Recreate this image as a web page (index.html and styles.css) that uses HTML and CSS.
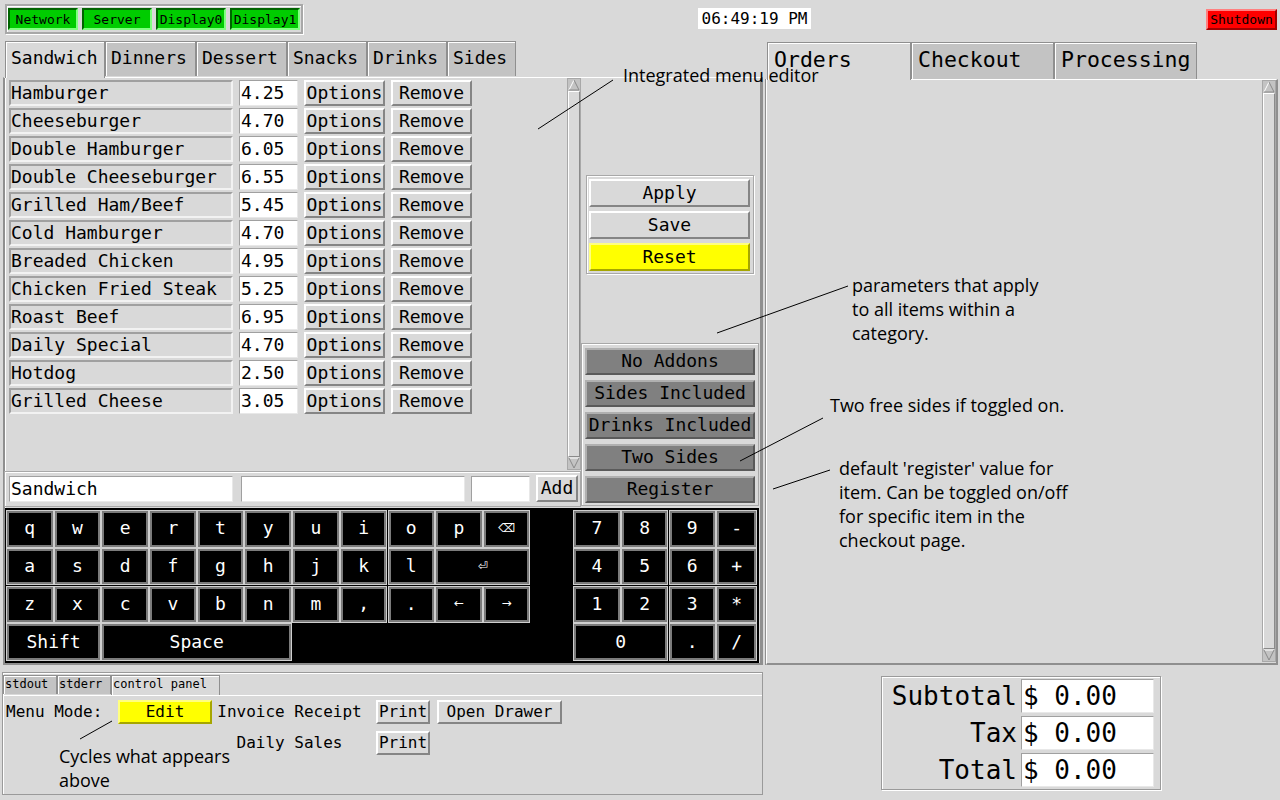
FILE: index.html
```html
<!DOCTYPE html>
<html>
<head>
<meta charset="utf-8">
<title>POS</title>
<link rel="stylesheet" href="styles.css">
</head>
<body>
<header class="topbar">
  <div class="status-group">
    <span class="status">Network</span>
    <span class="status">Server</span>
    <span class="status">Display0</span>
    <span class="status">Display1</span>
  </div>
  <div class="clock">06:49:19 PM</div>
  <div class="shutdown">Shutdown</div>
</header>

<div class="main">
  <section class="menu-panel">
    <nav class="tabs">
      <span class="tab active w-sandwich">Sandwich</span>
      <span class="tab w-dinners">Dinners</span>
      <span class="tab w-dessert">Dessert</span>
      <span class="tab w-snacks">Snacks</span>
      <span class="tab w-drinks">Drinks</span>
      <span class="tab w-sides">Sides</span>
    </nav>
    <div class="menu-body">
      <div class="item-list">
        <div class="items">
          <div class="row"><span class="name">Hamburger</span><span class="price">4.25</span><span class="btn">Options</span><span class="btn">Remove</span></div>
          <div class="row"><span class="name">Cheeseburger</span><span class="price">4.70</span><span class="btn">Options</span><span class="btn">Remove</span></div>
          <div class="row"><span class="name">Double Hamburger</span><span class="price">6.05</span><span class="btn">Options</span><span class="btn">Remove</span></div>
          <div class="row"><span class="name">Double Cheeseburger</span><span class="price">6.55</span><span class="btn">Options</span><span class="btn">Remove</span></div>
          <div class="row"><span class="name">Grilled Ham/Beef</span><span class="price">5.45</span><span class="btn">Options</span><span class="btn">Remove</span></div>
          <div class="row"><span class="name">Cold Hamburger</span><span class="price">4.70</span><span class="btn">Options</span><span class="btn">Remove</span></div>
          <div class="row"><span class="name">Breaded Chicken</span><span class="price">4.95</span><span class="btn">Options</span><span class="btn">Remove</span></div>
          <div class="row"><span class="name">Chicken Fried Steak</span><span class="price">5.25</span><span class="btn">Options</span><span class="btn">Remove</span></div>
          <div class="row"><span class="name">Roast Beef</span><span class="price">6.95</span><span class="btn">Options</span><span class="btn">Remove</span></div>
          <div class="row"><span class="name">Daily Special</span><span class="price">4.70</span><span class="btn">Options</span><span class="btn">Remove</span></div>
          <div class="row"><span class="name">Hotdog</span><span class="price">2.50</span><span class="btn">Options</span><span class="btn">Remove</span></div>
          <div class="row"><span class="name">Grilled Cheese</span><span class="price">3.05</span><span class="btn">Options</span><span class="btn">Remove</span></div>
        </div>
        <div class="scrollbar">
          <svg class="arrow" viewBox="0 0 12 12" width="12" height="12"><polyline points="1,11 6,1" stroke="#fff" fill="none"/><polyline points="6,1 11,11 1,11" stroke="#8a8a8a" fill="none"/></svg>
          <div class="thumb"></div>
          <svg class="arrow" viewBox="0 0 12 12" width="12" height="12"><polyline points="1,1 11,1" stroke="#fff" fill="none"/><polyline points="1,1 6,11 11,1" stroke="#8a8a8a" fill="none"/></svg>
        </div>
      </div>

      <div class="side">
        <div class="actions">
          <span class="act">Apply</span>
          <span class="act">Save</span>
          <span class="act reset">Reset</span>
        </div>
        <div class="addons">
          <span class="addon">No Addons</span>
          <span class="addon">Sides Included</span>
          <span class="addon">Drinks Included</span>
          <span class="addon">Two Sides</span>
          <span class="addon">Register</span>
        </div>
      </div>

      <div class="entry">
        <span class="field f-name">Sandwich</span>
        <span class="field f-desc"></span>
        <span class="field f-price"></span>
        <span class="btn add">Add</span>
      </div>

      <div class="keyboard">
        <span class="key">q</span><span class="key">w</span><span class="key">e</span><span class="key">r</span><span class="key">t</span><span class="key">y</span><span class="key">u</span><span class="key">i</span><span class="key">o</span><span class="key">p</span><span class="key sym">⌫</span>
        <span class="key np1">7</span><span class="key">8</span><span class="key">9</span><span class="key">-</span>

        <span class="key">a</span><span class="key">s</span><span class="key">d</span><span class="key">f</span><span class="key">g</span><span class="key">h</span><span class="key">j</span><span class="key">k</span><span class="key">l</span><span class="key sym span2">⏎</span>
        <span class="key np1">4</span><span class="key">5</span><span class="key">6</span><span class="key">+</span>

        <span class="key">z</span><span class="key">x</span><span class="key">c</span><span class="key">v</span><span class="key">b</span><span class="key">n</span><span class="key">m</span><span class="key">,</span><span class="key">.</span><span class="key sym">←</span><span class="key sym">→</span>
        <span class="key np1">1</span><span class="key">2</span><span class="key">3</span><span class="key">*</span>

        <span class="key span2">Shift</span><span class="key span4">Space</span>
        <span class="key np1 span2">0</span><span class="key">.</span><span class="key">/</span>
      </div>
    </div>
  </section>

  <section class="orders-panel">
    <nav class="tabs otabs">
      <span class="otab active">Orders</span>
      <span class="otab">Checkout</span>
      <span class="otab">Processing</span>
    </nav>
    <div class="orders-body">
      <div class="spacer"></div>
      <div class="scrollbar oscroll">
        <svg class="arrow" viewBox="0 0 12 12" width="12" height="12"><polyline points="1,11 6,1" stroke="#fff" fill="none"/><polyline points="6,1 11,11 1,11" stroke="#8a8a8a" fill="none"/></svg>
        <div class="thumb"></div>
        <svg class="arrow" viewBox="0 0 12 12" width="12" height="12"><polyline points="1,1 11,1" stroke="#fff" fill="none"/><polyline points="1,1 6,11 11,1" stroke="#8a8a8a" fill="none"/></svg>
      </div>
    </div>
  </section>
</div>

<div class="bottom">
  <section class="console">
    <nav class="ctabs">
      <span class="ctab w-stdout">stdout</span>
      <span class="ctab w-stderr">stderr</span>
      <span class="ctab active w-cp">control panel</span>
    </nav>
    <div class="cbody">
      <span class="clabel">Menu Mode:</span>
      <span class="cbtn edit">Edit</span>
      <span class="clabel center">Invoice Receipt</span>
      <span class="cbtn">Print</span>
      <span></span>
      <span class="cbtn">Open Drawer</span>
      <span></span>
      <span></span>
      <span class="clabel center">Daily Sales</span>
      <span class="cbtn">Print</span>
    </div>
  </section>
  <section class="totals">
    <span class="tlabel">Subtotal</span><span class="tval">$ 0.00</span>
    <span class="tlabel">Tax</span><span class="tval">$ 0.00</span>
    <span class="tlabel">Total</span><span class="tval">$ 0.00</span>
  </section>
</div>

<div class="notes">
  <svg class="note-lines" width="1280" height="800" viewBox="0 0 1280 800">
    <line x1="538" y1="129" x2="613" y2="80"/>
    <line x1="717" y1="333" x2="848" y2="286"/>
    <line x1="740" y1="461" x2="823" y2="418"/>
    <line x1="773" y1="489" x2="830" y2="470"/>
    <line x1="80" y1="739" x2="112" y2="721"/>
  </svg>
  <p class="note n-editor">Integrated menu editor</p>
  <p class="note n-params">parameters that apply<br>to all items within a<br>category.</p>
  <p class="note n-sides">Two free sides if toggled on.</p>
  <p class="note n-register">default 'register' value for<br>item. Can be toggled on/off<br>for specific item in the<br>checkout page.</p>
  <p class="note n-cycles">Cycles what appears<br>above</p>
</div>
</body>
</html>
```

FILE: styles.css
```css
* { box-sizing: border-box; }
html, body { margin: 0; padding: 0; }
body {
  width: 1280px;
  height: 800px;
  background: #d9d9d9;
  font-family: "DejaVu Sans Mono", "Liberation Mono", monospace;
  color: #000;
  position: relative;
  overflow: hidden;
}

/* ---------- top bar ---------- */
.topbar {
  height: 40px;
  display: flex;
  align-items: flex-start;
  padding: 4px 3px 0 5px;
}
.status-group {
  display: flex;
  gap: 4px;
  padding: 2px 1px;
  border: 2px solid #a8a8a8;
  box-shadow: inset 1px 1px 0 #fff, 1px 1px 0 #fff;
  height: 30px;
}
.status {
  width: 70px;
  height: 22px;
  background: #00cc00;
  border: 2px solid;
  border-color: #006400 #80ff80 #80ff80 #006400;
  font-size: 13px;
  display: flex;
  align-items: center;
  justify-content: center;
}
.clock {
  margin-left: 395px;
  margin-top: 4px;
  width: 113px;
  height: 21px;
  background: #fff;
  font-size: 16px;
  display: flex;
  align-items: center;
  justify-content: center;
}
.shutdown {
  margin-left: auto;
  margin-top: 5px;
  width: 71px;
  height: 21px;
  background: #ff0000;
  border: 2px solid;
  border-color: #ff8080 #a00000 #a00000 #ff8080;
  font-size: 13px;
  display: flex;
  align-items: center;
  justify-content: center;
}

/* ---------- main ---------- */
.main {
  display: flex;
  gap: 3px;
  padding-left: 3px;
  height: 625px;
}
.menu-panel {
  width: 760px;
  display: flex;
  flex-direction: column;
}
.tabs {
  display: flex;
  height: 37px;
  padding: 1px 0 0 2px;
  position: relative;
  z-index: 1;
}
.tab {
  height: 35px;
  background: #c3c3c3;
  border: 1px solid #8f8f8f;
  border-bottom: none;
  box-shadow: inset 1px 1px 0 #fff;
  font-size: 18px;
  padding: 5px 0 0 5px;
  line-height: 22px;
}
.tab.active {
  height: 37px;
  background: #d9d9d9;
}
.w-sandwich { width: 100px; }
.w-dinners { width: 91px; }
.w-dessert { width: 91px; }
.w-snacks { width: 80px; }
.w-drinks { width: 80px; }
.w-sides { width: 69px; }

.menu-body {
  flex: 1;
  border-style: solid;
  border-width: 1px 3px 2px 2px;
  border-color: #fff #8f8f8f #8f8f8f #8f8f8f;
  box-shadow: inset 1px 0 0 #fff;
  display: grid;
  grid-template-columns: 576px 1fr;
  grid-template-rows: 392px 38px 1fr;
}

.item-list {
  display: flex;
}
.items {
  flex: 1;
  padding: 2px 0 0 4px;
  display: flex;
  flex-direction: column;
  gap: 2px;
}
.row {
  display: flex;
  gap: 6px;
  height: 26px;
}
.name, .price, .btn, .field, .act, .addon, .key, .cbtn, .tval {
  display: flex;
  align-items: center;
  white-space: pre;
  padding-bottom: 2px;
}
.name {
  width: 224px;
  font-size: 18px;
  border: 2px solid;
  border-color: #a0a0a0 #f2f2f2 #f2f2f2 #a0a0a0;
}
.price {
  width: 59px;
  background: #fff;
  font-size: 18px;
  border: 1px solid;
  border-color: #a0a0a0 #e8e8e8 #e8e8e8 #a0a0a0;
  padding-left: 1px;
}
.btn {
  width: 81px;
  font-size: 18px;
  justify-content: center;
  border: 2px solid;
  border-color: #fff #858585 #858585 #fff;
}

.scrollbar {
  width: 14px;
  display: flex;
  flex-direction: column;
  border: 1px solid #a8a8a8;
  background: #c3c3c3;
}
.arrow { display: block; flex: none; margin: 0 auto; }
.thumb {
  flex: 1;
  border: 1px solid;
  border-color: #fff #8a8a8a #8a8a8a #fff;
  background: #d9d9d9;
}

/* side column */
.side {
  grid-row: 1 / span 2;
  grid-column: 2;
  display: flex;
  flex-direction: column;
}
.actions {
  margin: 97px 0 0 5px;
  width: 168px;
  border: 1px solid #a8a8a8;
  box-shadow: inset 1px 1px 0 #fff, 1px 1px 0 #fff;
  padding: 3px 3px 2px 2px;
  display: flex;
  flex-direction: column;
  gap: 4px;
}
.act {
  height: 28px;
  justify-content: center;
  font-size: 18px;
  border: 2px solid;
  border-color: #fff #858585 #858585 #fff;
}
.act.reset {
  background: #ffff00;
  border-color: #ffff80 #a6a600 #a6a600 #ffff80;
}
.addons {
  margin-top: 69px;
  width: 178px;
  height: 163px;
  border: 1px solid #a8a8a8;
  box-shadow: inset 1px 1px 0 #fff;
  padding: 4px 3px 0 3px;
  display: flex;
  flex-direction: column;
  gap: 5px;
}
.addon {
  height: 27px;
  justify-content: center;
  font-size: 18px;
  background: #808080;
  border: 2px solid;
  border-color: #b0b0b0 #5a5a5a #5a5a5a #b0b0b0;
}

/* entry row */
.entry {
  grid-row: 2;
  grid-column: 1;
  margin: 1px 0 1px -1px;
  border: 1px solid #a8a8a8;
  box-shadow: inset 1px 1px 0 #fff;
  display: flex;
  align-items: flex-start;
  padding: 4px 0 0 4px;
}
.field {
  height: 26px;
  background: #fff;
  font-size: 18px;
  border: 1px solid;
  border-color: #a0a0a0 #e8e8e8 #e8e8e8 #a0a0a0;
  padding-left: 1px;
}
.f-name { width: 224px; }
.f-desc { width: 224px; margin-left: 8px; }
.f-price { width: 59px; margin-left: 6px; }
.btn.add { width: 42px; margin-left: 6px; height: 27px; margin-top: -1px; }

/* keyboard */
.keyboard {
  grid-row: 3;
  grid-column: 1 / span 2;
  background: #000;
  margin-right: 1px;
  padding: 3px 0 0 2px;
  display: grid;
  grid-template-columns: repeat(11, 45.5px) 40.4px 45.5px 45.5px 45.5px 38.9px;
  grid-template-rows: repeat(4, 35.5px);
  column-gap: 2.2px;
  row-gap: 2.3px;
}
.key {
  background: #000;
  color: #fff;
  font-size: 18px;
  justify-content: center;
  border: 2px solid #7b7b7b;
  box-shadow: 0 0 0 1px #cfcfcf;
}
.key.sym {
  font-family: "DejaVu Sans", sans-serif;
  font-size: 12px;
}
.key.np1 { grid-column-start: 13; }
.span2 { grid-column-end: span 2; }
.span4 { grid-column-end: span 4; }

/* orders panel */
.orders-panel {
  width: 512px;
  display: flex;
  flex-direction: column;
}
.otabs {
  height: 39px;
  padding: 2px 0 0 1px;
}
.otab {
  height: 37px;
  background: #c3c3c3;
  border: 1px solid #8f8f8f;
  border-bottom: none;
  box-shadow: inset 1px 1px 0 #fff;
  font-size: 21.5px;
  padding: 4px 0 0 6px;
  line-height: 26px;
  width: 143px;
}
.otab.active {
  height: 38px;
  background: #d9d9d9;
  width: 144px;
}
.orders-body {
  flex: 1;
  display: flex;
  border-style: solid;
  border-width: 1px 2px 2px 1px;
  border-color: #fff #8f8f8f #8f8f8f #fff;
  box-shadow: -1px 0 0 #8f8f8f;
  padding: 0 0 1px 0;
}
.spacer { flex: 1; }
.oscroll { width: 14px; }

/* bottom */
.bottom {
  display: flex;
  align-items: flex-start;
  padding: 7px 0 0 2px;
}
.console {
  width: 761px;
  height: 123px;
  border: 1px solid #9a9a9a;
  box-shadow: inset 1px 1px 0 #fff;
  display: flex;
  flex-direction: column;
}
.ctabs {
  display: flex;
  padding-top: 2px;
  height: 22px;
  position: relative;
  z-index: 1;
}
.ctab {
  height: 19px;
  background: #c3c3c3;
  border: 1px solid #8f8f8f;
  border-bottom: none;
  box-shadow: inset 1px 1px 0 #fff;
  font-size: 12px;
  line-height: 17px;
  padding-left: 1px;
}
.ctab.active { background: #d9d9d9; height: 20px; }
.w-stdout { width: 54px; }
.w-stderr { width: 54px; }
.w-cp { width: 109px; }
.cbody {
  flex: 1;
  border-top: 1px solid #fff;
  display: grid;
  grid-template-columns: 115px 94px 164px 54px 7px 125px;
  grid-template-rows: 24px 24px;
  row-gap: 7px;
  align-content: start;
  padding: 4px 0 0 0;
  font-size: 16px;
}
.clabel {
  display: flex;
  align-items: center;
  white-space: pre;
  padding: 0 0 2px 3px;
}
.clabel.center { justify-content: center; padding: 0 9px 2px 0; }
.cbtn {
  justify-content: center;
  font-size: 16px;
  border: 2px solid;
  border-color: #fff #858585 #858585 #fff;
}
.cbtn.edit {
  background: #ffff00;
  border-color: #ffff80 #a6a600 #a6a600 #ffff80;
}
.totals {
  margin: 4px 0 0 118px;
  width: 280px;
  height: 114px;
  border: 1px solid #9a9a9a;
  box-shadow: inset 1px 1px 0 #fff, 1px 1px 0 #fff;
  display: grid;
  grid-template-columns: 1fr 133px;
  grid-template-rows: repeat(3, 34px);
  column-gap: 4px;
  row-gap: 3px;
  padding: 2px 6px 0 3px;
  font-size: 26px;
}
.tlabel {
  display: flex;
  align-items: center;
  justify-content: flex-end;
}
.tval {
  background: #fff;
  border: 1px solid;
  border-color: #a0a0a0 #e8e8e8 #e8e8e8 #a0a0a0;
  padding-left: 1px;
  padding-bottom: 0;
}

/* annotations */
.notes {
  position: absolute;
  left: 0;
  top: 0;
  width: 1280px;
  height: 800px;
  pointer-events: none;
  z-index: 5;
}
.note-lines { position: absolute; left: 0; top: 0; }
.note-lines line { stroke: #000; stroke-width: 1; }
.note {
  position: absolute;
  margin: 0;
  font-family: "Open Sans", sans-serif;
  font-size: 18px;
  line-height: 24px;
  white-space: nowrap;
}
.n-editor { left: 623px; top: 63px; }
.n-params { left: 852px; top: 273px; }
.n-sides { left: 830px; top: 393px; }
.n-register { left: 839px; top: 456px; }
.n-cycles { left: 59px; top: 744px; }
```
